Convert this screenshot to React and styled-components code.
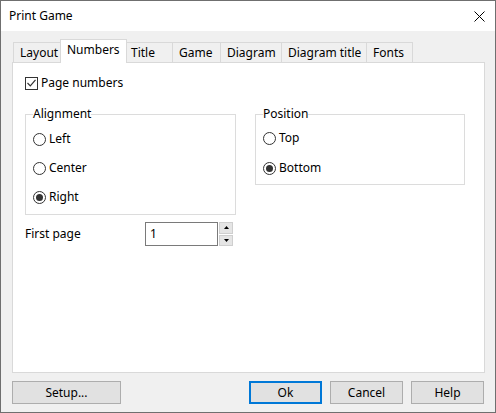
import React from 'react'
import styled, { createGlobalStyle } from 'styled-components'

const GlobalStyle = createGlobalStyle`
  html, body {
    margin: 0;
    padding: 0;
    background: #fff;
  }
  body {
    font-family: "Noto Sans", "Segoe UI", sans-serif;
    font-size: 12px;
    color: #000;
  }
  * {
    box-sizing: border-box;
  }
`

const Window = styled.div`
  width: 496px;
  height: 413px;
  border: 1px solid #6f6f6f;
  background: #f0f0f0;
  display: flex;
  flex-direction: column;
`

const TitleBar = styled.div`
  height: 30px;
  flex: none;
  background: #fff;
  display: flex;
  align-items: center;
  justify-content: space-between;
  padding: 0 10px 0 8px;
`

const Caption = styled.span`
  font-size: 12px;
  line-height: 16px;
`

const Body = styled.div`
  flex: 1;
  padding: 8px 10px 0 11px;
  display: flex;
  flex-direction: column;
`

const TabStrip = styled.div`
  height: 23px;
  display: flex;
  align-items: flex-end;
  padding-left: 1px;
`

const Tab = styled.div`
  width: ${p => p.$w}px;
  height: ${p => (p.$active ? 24 : 20)}px;
  margin-left: ${p => p.$ml}px;
  margin-right: ${p => (p.$active ? -2 : 0)}px;
  margin-bottom: ${p => (p.$active ? -1 : 0)}px;
  position: ${p => (p.$active ? 'relative' : 'static')};
  z-index: ${p => (p.$active ? 1 : 'auto')};
  background: ${p => (p.$active ? '#fff' : '#f0f0f0')};
  border: 1px solid #d9d9d9;
  border-bottom: none;
  display: flex;
  align-items: ${p => (p.$active ? 'flex-start' : 'center')};
  padding-top: ${p => (p.$active ? 2 : 0)}px;
  padding-left: 6px;
  white-space: nowrap;
  line-height: 16px;
`

const Panel = styled.div`
  width: 473px;
  height: 311px;
  background: #fff;
  border: 1px solid #d9d9d9;
  padding: 12px 0 0 12px;
  display: flex;
  flex-direction: column;
`

const CheckRow = styled.label`
  height: 16px;
  display: flex;
  align-items: center;
  gap: 3px;
  line-height: 16px;
`

const Box = styled.span`
  width: 13px;
  height: 13px;
  border: 1px solid #333;
  background: #fff;
  display: flex;
  align-items: center;
  justify-content: center;
`

const Groups = styled.div`
  display: flex;
  align-items: flex-start;
  gap: 19px;
  margin-top: 15px;
`

const Group = styled.fieldset`
  margin: 0;
  padding: 0 7px;
  min-width: 0;
  width: ${p => p.$w}px;
  height: ${p => p.$h}px;
  border: 1px solid #dcdcdc;
  display: flex;
  flex-direction: column;
  gap: ${p => p.$gap}px;
`

const Legend = styled.legend`
  padding: 0;
  font-size: 12px;
  line-height: 16px;
`

const RadioRow = styled.label`
  height: 16px;
  display: flex;
  align-items: center;
  gap: 3px;
  line-height: 16px;
  margin-top: ${p => p.$mt || 0}px;
`

const Circle = styled.span`
  width: 13px;
  height: 13px;
  border-radius: 50%;
  border: 1px solid #333;
  background: #fff;
  display: flex;
  align-items: center;
  justify-content: center;
  &::after {
    content: '';
    width: 7px;
    height: 7px;
    border-radius: 50%;
    background: ${p => (p.$on ? '#333' : 'transparent')};
  }
`

const FieldRow = styled.div`
  display: flex;
  align-items: center;
  height: 24px;
  margin-top: 7px;
`

const FieldLabel = styled.span`
  width: 120px;
  line-height: 16px;
`

const Input = styled.div`
  width: 73px;
  height: 24px;
  border: 1px solid #7a7a7a;
  background: #fff;
  padding: 0 4px;
  display: flex;
  align-items: center;
  line-height: 16px;
`

const Spinner = styled.div`
  width: 14px;
  height: 24px;
  margin-left: 1px;
  display: flex;
  flex-direction: column;
  gap: 1px;
`

const SpinButton = styled.div`
  flex: 1;
  background: #e5e5e5;
  border: 1px solid #cfcfcf;
  display: flex;
  align-items: center;
  justify-content: center;
`

const Footer = styled.div`
  display: flex;
  gap: 8px;
  margin-top: 8px;
  padding-right: 1px;
`

const Button = styled.div`
  width: ${p => p.$w || 73}px;
  height: 23px;
  background: #e1e1e1;
  border: ${p => (p.$default ? '2px solid #0078d7' : '1px solid #adadad')};
  display: flex;
  align-items: center;
  justify-content: center;
  line-height: 16px;
  margin-left: ${p => (p.$push ? 'auto' : '0')};
`

const tabs = [
  { label: 'Layout', w: 50, ml: 0 },
  { label: 'Numbers', w: 67, ml: -3, active: true },
  { label: 'Title', w: 49, ml: -1 },
  { label: 'Game', w: 49, ml: -1 },
  { label: 'Diagram', w: 62, ml: -1 },
  { label: 'Diagram title', w: 86, ml: -1 },
  { label: 'Fonts', w: 47, ml: -1 }
]

const Radio = ({ label, on, mt }) => (
  <RadioRow $mt={mt}>
    <Circle $on={on} />
    {label}
  </RadioRow>
)

const Arrow = ({ up }) => (
  <svg width='5' height='3' viewBox='0 0 5 3'>
    <path d={up ? 'M0 3 L2.5 0 L5 3 Z' : 'M0 0 L2.5 3 L5 0 Z'} fill='#000' />
  </svg>
)

const App = () => (
  <Window>
    <GlobalStyle />
    <TitleBar>
      <Caption>Print Game</Caption>
      <svg width='11' height='11' viewBox='0 0 11 11'>
        <path d='M0.5 0.5 L10.5 10.5 M10.5 0.5 L0.5 10.5' stroke='#000' strokeWidth='1' />
      </svg>
    </TitleBar>
    <Body>
      <TabStrip>
        {tabs.map(t => (
          <Tab key={t.label} $w={t.w} $ml={t.ml} $active={t.active}>
            {t.label}
          </Tab>
        ))}
      </TabStrip>
      <Panel>
        <CheckRow>
          <Box>
            <svg width='9' height='8' viewBox='0 0 9 8'>
              <path d='M0.5 4 L3.3 6.8 L8.5 0.8' stroke='#333' strokeWidth='1.2' fill='none' />
            </svg>
          </Box>
          Page numbers
        </CheckRow>
        <Groups>
          <Group $w={211} $h={109} $gap={13}>
            <Legend>Alignment</Legend>
            <Radio label='Left' mt={9} />
            <Radio label='Center' />
            <Radio label='Right' on />
          </Group>
          <Group $w={210} $h={79} $gap={14}>
            <Legend>Position</Legend>
            <Radio label='Top' mt={8} />
            <Radio label='Bottom' on />
          </Group>
        </Groups>
        <FieldRow>
          <FieldLabel>First page</FieldLabel>
          <Input>1</Input>
          <Spinner>
            <SpinButton><Arrow up /></SpinButton>
            <SpinButton><Arrow /></SpinButton>
          </Spinner>
        </FieldRow>
      </Panel>
      <Footer>
        <Button $w={109}>Setup...</Button>
        <Button $push $default>Ok</Button>
        <Button>Cancel</Button>
        <Button>Help</Button>
      </Footer>
    </Body>
  </Window>
)

export default App
